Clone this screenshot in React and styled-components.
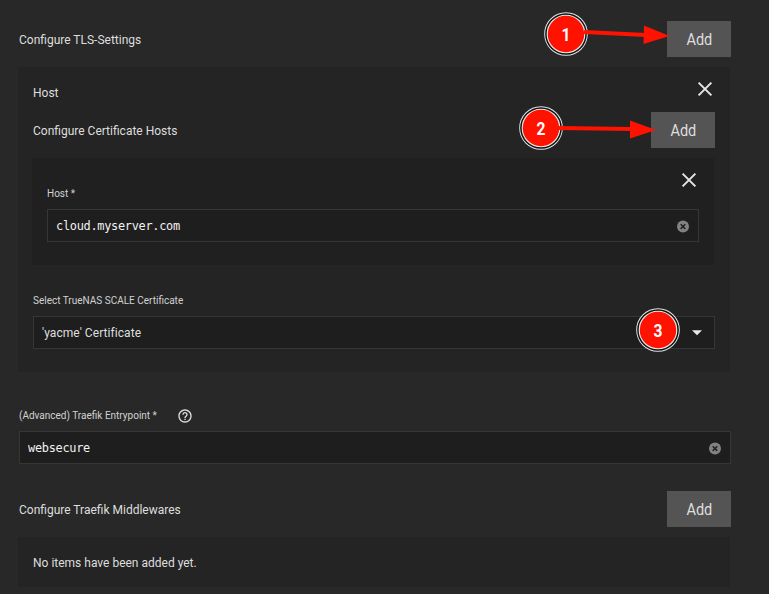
import React from "react";
import styled, { createGlobalStyle } from "styled-components";

const GlobalStyle = createGlobalStyle`
  * { box-sizing: border-box; }
  html, body { margin: 0; background: #282828; overflow: hidden; }
  body { font-family: Roboto, "Liberation Sans", sans-serif; font-size: 12px; color: #dedede; }
`;

const Page = styled.main`
  position: relative;
  width: 769px;
  height: 594px;
  padding: 21px 38px 0 18px;
  background: #282828;
  overflow: hidden;
`;

const HeaderRow = styled.div`
  display: flex;
  align-items: center;
  justify-content: space-between;
  height: 36px;
  padding-left: 1px;
`;

const Title = styled.span`
  font-size: 12px;
  line-height: 16px;
  padding-top: 1px;
`;

const AddButton = styled.button`
  width: 64px;
  height: 36px;
  padding: 2px 0 0;
  border: 0;
  background: #545454;
  color: #dedede;
  font: 15px/20px Roboto, sans-serif;
`;

const ButtonText = styled.span`
  display: inline-block;
  transform: scale(0.97, 1.08);
`;

const Panel = styled.section`
  width: 712px;
  height: 305px;
  margin-top: 10px;
  padding: 13px 0 0 14px;
  background: #242424;
`;

const PanelTop = styled.div`
  display: flex;
  align-items: flex-start;
  justify-content: space-between;
  height: 32px;
  padding: 1px 17px 0 1px;
  & > ${Title} { margin-top: 3px; }
`;

const PanelBody = styled.div`
  width: 683px;
`;

const NestedPanel = styled.section`
  width: 682px;
  height: 107px;
  margin-top: 10px;
  padding: 14px 15px 0;
  background: #202020;
`;

const NestedTop = styled.div`
  display: flex;
  justify-content: space-between;
  height: 37px;
  padding-right: 2px;
`;

const FieldLabel = styled.label`
  display: flex;
  align-items: center;
  height: 14px;
  font-size: 10px;
  color: #d2d2d2;
`;

const NestedLabel = styled(FieldLabel)`
  margin-top: 14px;
`;

const Field = styled.div`
  display: flex;
  align-items: center;
  justify-content: space-between;
  height: 33px;
  padding: 0 8px;
  border: 1px solid #363636;
  background: #1e1e1e;
  color: ${(p) => (p.$mono ? "#f2f2f2" : "#dedede")};
  font: ${(p) => (p.$mono ? '12px/16px "DejaVu Sans Mono", monospace' : "12px/16px Roboto, sans-serif")};
  letter-spacing: ${(p) => (p.$mono ? "-0.3px" : "0.06px")};
`;

const MonoText = styled.span`
  display: inline-block;
  transform: scale(0.993, 1.05);
  transform-origin: 0 75%;
`;

const SelectGroup = styled.div`
  margin: 28px 0 0 1px;
  & > ${Field} { margin-top: 9px; width: 682px; }
`;

const EntryGroup = styled.section`
  margin: 36px 0 27px 1px;
`;

const EntryLabel = styled.div`
  display: flex;
  align-items: center;
  gap: 20px;
  height: 15px;
  margin-bottom: 8px;
`;

const EmptyPanel = styled.div`
  width: 712px;
  height: 50px;
  margin-top: 10px;
  padding: 18px 15px;
  background: #242424;
  line-height: 16px;
`;

const Icon = styled.svg`
  display: block;
  flex: none;
`;

const Annotations = styled.svg`
  position: absolute;
  inset: 0;
  pointer-events: none;
`;

const Digit = styled.text`
  fill: #fff;
  font: 700 17px Roboto, sans-serif;
  text-anchor: middle;
`;

const CloseIcon = () => (
  <Icon width="16" height="16" viewBox="0 0 16 16">
    <path d="M1.6 1.6 14.4 14.4M14.4 1.6 1.6 14.4" stroke="#e4e4e4" strokeWidth="2" />
  </Icon>
);

const ClearIcon = () => (
  <Icon width="13" height="15" viewBox="0 0 13 15">
    <circle cx="6" cy="8.6" r="6" fill="#828282" />
    <path d="m3.7 6.3 4.6 4.6m0-4.6-4.6 4.6" stroke="#222" strokeWidth="1.5" />
  </Icon>
);

const HelpIcon = () => (
  <Icon width="16" height="16" viewBox="0 0 24 24">
    <path fill="#dedede" d="M11 18h2v-2h-2v2zm1-16C6.48 2 2 6.48 2 12s4.48 10 10 10 10-4.48 10-10S17.52 2 12 2zm0 18c-4.41 0-8-3.59-8-8s3.59-8 8-8 8 3.59 8 8-3.59 8-8 8zm0-14c-2.21 0-4 1.79-4 4h2c0-1.1.9-2 2-2s2 .9 2 2c0 2-3 1.75-3 5h2c0-2.25 3-2.5 3-5 0-2.21-1.79-4-4-4z" />
  </Icon>
);

const CaretIcon = () => (
  <Icon width="18" height="10" viewBox="0 0 18 10">
    <path d="M4 2.2h10L9 7.2z" fill="#e8e8e8" />
  </Icon>
);

const Marker = ({ x, y, n }) => (
  <g>
    <circle cx={x} cy={y} r="20" fill="#ff1200" stroke="#e6e6e6" strokeWidth="3.6" />
    <circle cx={x} cy={y} r="20.1" fill="none" stroke="#111" strokeWidth="1.5" />
    <Digit transform={`translate(${x} ${y + 7}) scale(0.92 1.1)`}>{n}</Digit>
  </g>
);

const AddAction = () => (
  <AddButton><ButtonText>Add</ButtonText></AddButton>
);

export default function App() {
  return (
    <Page>
      <GlobalStyle />
      <HeaderRow>
        <Title>Configure TLS-Settings</Title>
        <AddAction />
      </HeaderRow>
      <Panel>
        <PanelTop>
          <Title>Host</Title>
          <CloseIcon />
        </PanelTop>
        <PanelBody>
          <HeaderRow>
            <Title>Configure Certificate Hosts</Title>
            <AddAction />
          </HeaderRow>
          <NestedPanel>
            <NestedTop>
              <NestedLabel>Host *</NestedLabel>
              <CloseIcon />
            </NestedTop>
            <Field $mono><MonoText>cloud.myserver.com</MonoText><ClearIcon /></Field>
          </NestedPanel>
          <SelectGroup>
            <FieldLabel>Select TrueNAS SCALE Certificate</FieldLabel>
            <Field>'yacme' Certificate<CaretIcon /></Field>
          </SelectGroup>
        </PanelBody>
      </Panel>
      <EntryGroup>
        <EntryLabel>
          <FieldLabel>(Advanced) Traefik Entrypoint *</FieldLabel>
          <HelpIcon />
        </EntryLabel>
        <Field $mono><MonoText>websecure</MonoText><ClearIcon /></Field>
      </EntryGroup>
      <HeaderRow>
        <Title>Configure Traefik Middlewares</Title>
        <AddAction />
      </HeaderRow>
      <EmptyPanel>No items have been added yet.</EmptyPanel>
      <Annotations width="769" height="594">
        <Marker x={566} y={34} n="1" />
        <Marker x={541} y={128} n="2" />
        <Marker x={658} y={330} n="3" />
        <g stroke="#ff1200" strokeWidth="4">
          <path d="M584 32 646 35" />
          <path d="M558 128 632 129" />
        </g>
        <g fill="#ff1200">
          <path d="M644 25.5 669.5 36 643.5 44z" />
          <path d="M630 120.5 656 130 630 138.5z" />
        </g>
      </Annotations>
    </Page>
  );
}
